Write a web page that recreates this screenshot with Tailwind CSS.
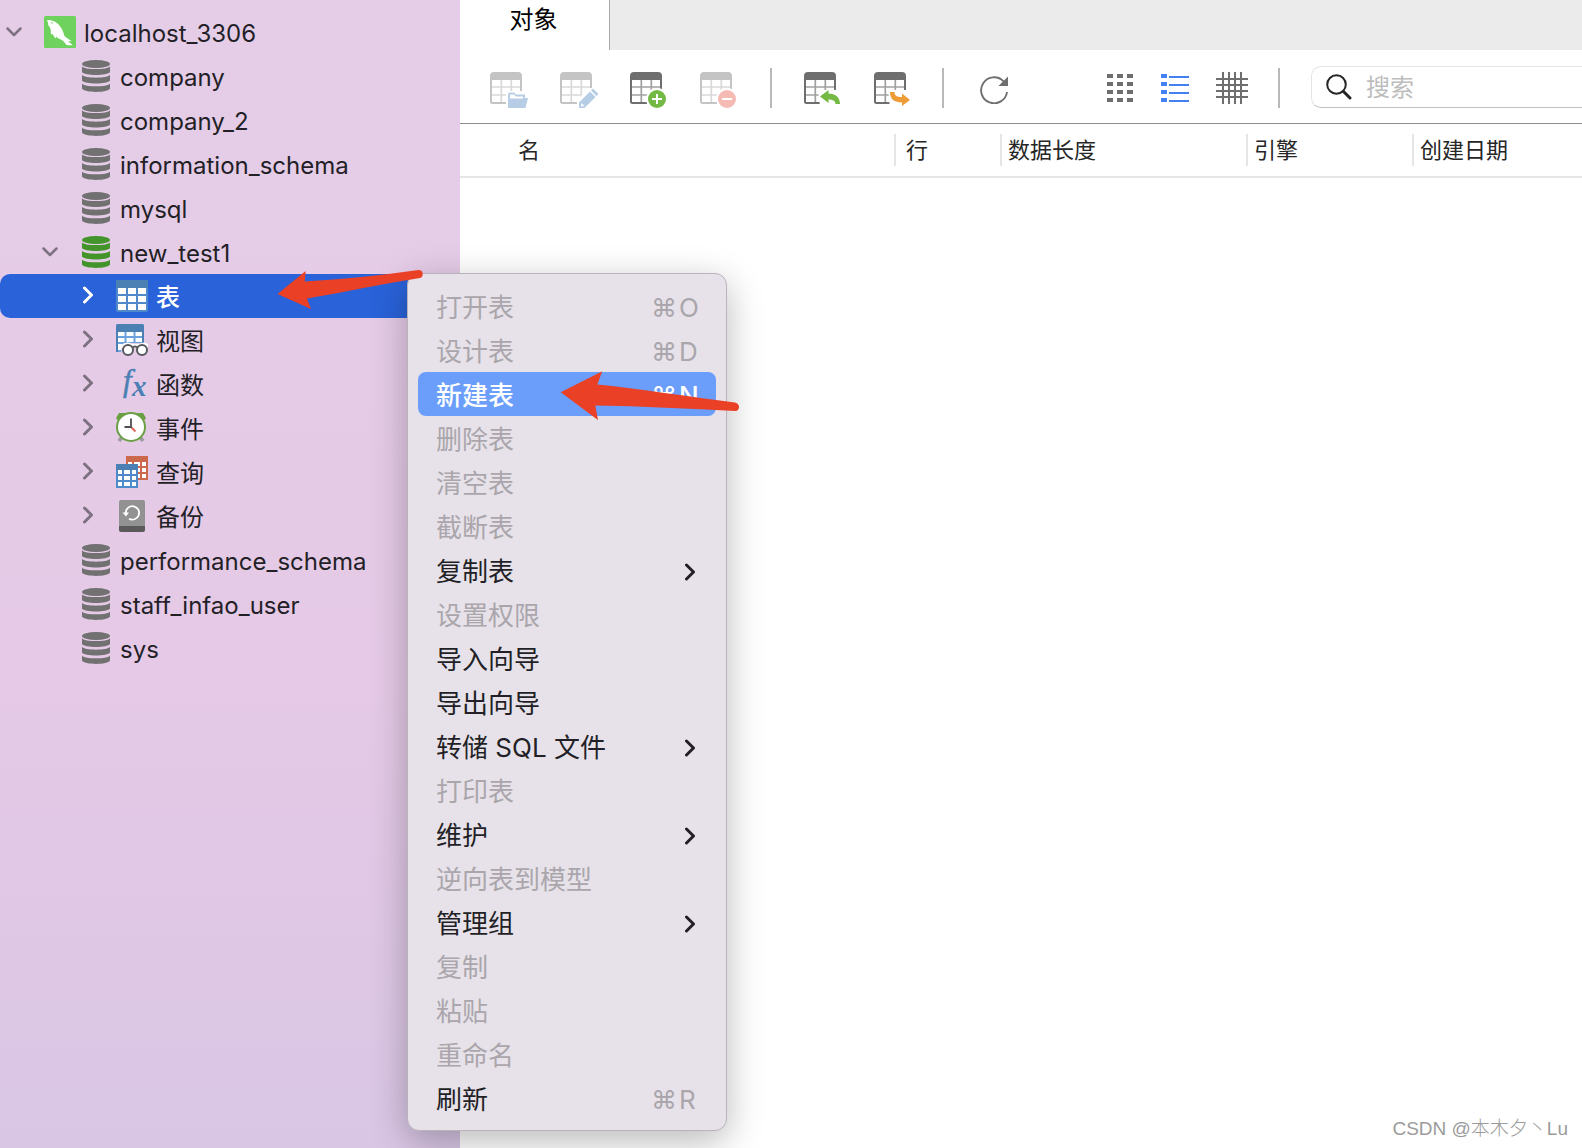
<!DOCTYPE html>
<html lang="zh-CN">
<head>
<meta charset="utf-8">
<meta name="viewport" content="width=device-width, initial-scale=1">
<title>localhost_3306</title>
<script src="https://cdn.jsdelivr.net/npm/@tailwindcss/browser@4"></script>
</head>
<body class="relative flex min-h-screen overflow-x-hidden bg-white font-['Inter','Noto_Sans_CJK_SC',sans-serif] text-[#231f26]">

<!-- shared icon shapes -->
<svg class="hidden" aria-hidden="true">
  <symbol id="db" viewBox="0 0 28 32">
    <ellipse cx="14" cy="4" rx="14" ry="4"/>
    <path d="M0 6.2C2 10 26 10 28 6.2V12C26 16 2 16 0 12Z"/>
    <path d="M0 14.8C2 18.6 26 18.6 28 14.8V20.500C26 24.500 2 24.500 0 20.500Z"/>
    <path d="M0 23.400C2 27.200 26 27.200 28 23.400V28.500C26 33 2 33 0 28.500Z"/>
  </symbol>
  <symbol id="right" viewBox="0 0 10 18"><path d="M1.500 2 8.500 9 1.500 16" fill="none" stroke="currentColor" stroke-width="3" stroke-linecap="round" stroke-linejoin="round"/></symbol>
  <symbol id="down" viewBox="0 0 16 10"><path d="M1.500 1.500 8 8 14.500 1.500" fill="none" stroke="currentColor" stroke-width="2.500" stroke-linecap="round" stroke-linejoin="round"/></symbol>
  <symbol id="sheet" viewBox="0 0 38 36">
    <path d="M1 8V29.500Q1 31 2.500 31H29.500Q31 31 31 29.500V8" fill="none" stroke="currentColor" stroke-width="2"/>
    <path d="M11.300 8V31M21.300 8V31M2 15H30M2 23H30" fill="none" stroke="currentColor" stroke-opacity=".65" stroke-width="1.700"/>
    <path d="M0 8V4Q0 0 4 0H28Q32 0 32 4V8Z" fill="currentColor"/>
  </symbol>
</svg>

<aside class="w-[460px] shrink-0 bg-linear-to-b from-[#e5cde7] via-[#e5c9e6] via-60% to-[#d9c6e5] pt-[10px]">
  <ul class="text-2xl leading-[44px]">
    <li class="flex h-[44px] items-center pl-[6px]">
      <svg class="h-[10px] w-4 text-[#7d7282]"><use href="#down"/></svg>
      <svg class="ml-[22px] h-8 w-8" viewBox="0 0 32 32"><rect width="32" height="32" rx="1.500" fill="#6fd25f"/><path d="M3.200 4C6 3.800 11 4.500 14.500 8.500C18 12.500 19.300 15.500 20.300 19.500C21 21.500 24.500 22.500 27.600 25.200L23.900 25.400C25.500 26.800 27.800 27.500 28.700 29.500C26 28.800 23.500 29.800 22 28.500C20.800 27.200 20 24.800 17 23.500C15.200 22.700 13.200 22.200 12.300 20.200C11.900 20.900 12.600 21.900 11.700 22.300C10 21.500 9.800 19.200 8.700 18.300C8 17.600 7.600 18.600 7.300 18.400C6.200 16.700 7.400 14.900 6.500 12.700C5.700 10.600 3.700 9.500 4 6.900C3.900 6 3.100 5.200 3.200 4Z" fill="#fff"/><circle cx="8" cy="7" r=".8" fill="#6fd25f"/></svg>
      <span class="ml-2 pt-[3px]">localhost_3306</span>
    </li>
    <li class="flex h-[44px] items-center pl-[82px]"><svg class="h-8 w-7 fill-[#717171]"><use href="#db"/></svg><span class="ml-[10px] pt-[3px]">company</span></li>
    <li class="flex h-[44px] items-center pl-[82px]"><svg class="h-8 w-7 fill-[#717171]"><use href="#db"/></svg><span class="ml-[10px] pt-[3px]">company_2</span></li>
    <li class="flex h-[44px] items-center pl-[82px]"><svg class="h-8 w-7 fill-[#717171]"><use href="#db"/></svg><span class="ml-[10px] pt-[3px]">information_schema</span></li>
    <li class="flex h-[44px] items-center pl-[82px]"><svg class="h-8 w-7 fill-[#717171]"><use href="#db"/></svg><span class="ml-[10px] pt-[3px]">mysql</span></li>
    <li class="flex h-[44px] items-center pl-[42px]">
      <svg class="h-[10px] w-4 text-[#7d7282]"><use href="#down"/></svg>
      <svg class="ml-6 h-8 w-7 fill-[#43952b]"><use href="#db"/></svg><span class="ml-[10px] pt-[3px]">new_test1</span>
    </li>
    <li class="flex h-[44px] items-center rounded-l-[10px] bg-[#2962d9] pl-[83px] font-medium text-white">
      <svg class="mb-[2px] h-[18px] w-[10px]"><use href="#right"/></svg>
      <svg class="ml-[23px] h-8 w-8" viewBox="0 0 32 32"><rect width="32" height="32" rx="2" fill="#4f8bcb"/><path d="M0 8V2Q0 0 2 0H30Q32 0 32 2V8Z" fill="#4b80b5"/><path fill="#fff" d="M2 8h8v6H2zM12 8h8v6h-8zM22 8h8v6h-8zM2 16h8v6H2zM12 16h8v6h-8zM22 16h8v6h-8zM2 24h8v6H2zM12 24h8v6h-8zM22 24h8v6h-8z"/></svg>
      <span class="ml-2 pt-[3px]">表</span>
    </li>
    <li class="flex h-[44px] items-center pl-[83px]">
      <svg class="mb-[2px] h-[18px] w-[10px] text-[#7d7282]"><use href="#right"/></svg>
      <svg class="ml-[23px] h-8 w-8" viewBox="0 0 32 32"><path d="M0 28V2Q0 0 2 0H26Q28 0 28 2V19H8Q5 22 5 28Z" fill="#6ba3df"/><path d="M0 8V2Q0 0 2 0H26Q28 0 28 2V8ZM0 8H2V28H0ZM26 8h2v11h-2z" fill="#4b80b5"/><path fill="#fff" d="M2 8h6.500v4H2zM10.500 8h7v4h-7zM19.500 8H26v4h-6.500zM2 14h6.500v4H2zM10.500 14h7v4h-7zM19.500 14H26v4h-6.500zM2 20h5l-2 6H2z"/><path d="M7 20Q12 17 16 20H24Q28 17 32 20V24H6Z" fill="#fff"/><g fill="#fff" stroke="#55585c" stroke-width="2"><path d="M16 24Q19 21 22 24" fill="none"/><circle cx="12" cy="26" r="5"/><circle cx="26" cy="26" r="5"/></g></svg>
      <span class="ml-2 pt-[3px]">视图</span>
    </li>
    <li class="flex h-[44px] items-center pl-[83px]">
      <svg class="mb-[2px] h-[18px] w-[10px] text-[#7d7282]"><use href="#right"/></svg>
      <svg class="ml-[23px] h-8 w-8 overflow-visible fill-[#4b80b5] font-['Liberation_Serif',serif] italic" viewBox="0 0 32 32"><text x="7" y="23" font-size="31" stroke="#4b80b5" stroke-width=".5">f</text><text x="16" y="28" font-size="29" font-weight="700">x</text></svg>
      <span class="ml-2 pt-[3px]">函数</span>
    </li>
    <li class="flex h-[44px] items-center pl-[83px]">
      <svg class="mb-[2px] h-[18px] w-[10px] text-[#7d7282]"><use href="#right"/></svg>
      <svg class="ml-[23px] h-8 w-8" viewBox="0 0 32 32"><path d="M6 25 3 29M24 25l3 4" stroke="#9a9a9a" stroke-width="3.500"/><path d="M0 6 3 1 9 1 10 4 3 10ZM30 6 27 1 21 1 20 4 27 10Z" fill="#6aa043"/><circle cx="15" cy="15" r="14" fill="#fff" stroke="#6aa043" stroke-width="2"/><path d="M15 15 19.500 19.500" stroke="#e5645a" stroke-width="2"/><path d="M15 6.500V15H8.500" fill="none" stroke="#4f4f4f" stroke-width="1.800"/></svg>
      <span class="ml-2 pt-[3px]">事件</span>
    </li>
    <li class="flex h-[44px] items-center pl-[83px]">
      <svg class="mb-[2px] h-[18px] w-[10px] text-[#7d7282]"><use href="#right"/></svg>
      <svg class="ml-[23px] h-8 w-8" viewBox="0 0 32 32"><path d="M10 0H32V24H10Z" fill="#cc694c"/><path fill="#fff" d="M12 6h4v4h-4zM18 6h6v4h-6zM26 6h4v4h-4zM22 12h2v4h-2zM26 12h4v4h-4zM22 18h2v4h-2zM26 18h4v4h-4z"/><path d="M0 8H22V32H0Z" fill="#4f8bcb"/><path d="M0 8H22V14H0Z" fill="#4b80b5"/><path fill="#fff" d="M2 14h4v4H2zM8 14h6v4H8zM16 14h4v4h-4zM2 20h4v4H2zM8 20h6v4H8zM16 20h4v4h-4zM2 26h4v4H2zM8 26h6v4H8zM16 26h4v4h-4z"/></svg>
      <span class="ml-2 pt-[3px]">查询</span>
    </li>
    <li class="flex h-[44px] items-center pl-[83px]">
      <svg class="mb-[2px] h-[18px] w-[10px] text-[#7d7282]"><use href="#right"/></svg>
      <svg class="ml-[23px] h-8 w-8" viewBox="0 0 32 32"><path d="M3 26V2Q3 0 5 0H27Q29 0 29 2V26Z" fill="#929292"/><path d="M3 26H29V30Q29 32 27 32H5Q3 32 3 30Z" fill="#5a5a5a"/><path d="M9.700 13A6.700 6.700 0 1 1 13 18.700" fill="none" stroke="#fff" stroke-width="1.800"/><path d="M6.500 12.500H13L10 16.500Z" fill="#fff"/></svg>
      <span class="ml-2 pt-[3px]">备份</span>
    </li>
    <li class="flex h-[44px] items-center pl-[82px]"><svg class="h-8 w-7 fill-[#717171]"><use href="#db"/></svg><span class="ml-[10px] pt-[3px]">performance_schema</span></li>
    <li class="flex h-[44px] items-center pl-[82px]"><svg class="h-8 w-7 fill-[#717171]"><use href="#db"/></svg><span class="ml-[10px] pt-[3px]">staff_infao_user</span></li>
    <li class="flex h-[44px] items-center pl-[82px]"><svg class="h-8 w-7 fill-[#717171]"><use href="#db"/></svg><span class="ml-[10px] pt-[3px]">sys</span></li>
  </ul>
</aside>

<main class="flex min-w-0 flex-1 flex-col">
  <div class="flex h-[50px] bg-[#ebebeb]">
    <button class="w-[150px] border-r border-[#a8a8a8] bg-white pr-[2px] pb-[10px] text-2xl text-black">对象</button>
  </div>

  <div class="flex h-[74px] items-center border-b border-[#8e8e8e] pt-[2px] pl-[30px] text-[#6e6e6e]">
    <div class="flex gap-8 pt-1">
      <button disabled aria-label="打开表" class="text-[#c4c4c4]"><svg class="h-9 w-[38px]" viewBox="0 0 38 36"><use href="#sheet"/><path d="M16 19H38V36H16Z" fill="#fff"/><path d="M18 36V22Q18 20.500 19.500 20.500H24L26 22.500H35V26H38L35.500 36Z" fill="#b7cde5"/><path d="M20 26.500V22.500H24L26 24.500H33V26.500Z" fill="#fff"/></svg></button>
      <button disabled aria-label="设计表" class="text-[#c4c4c4]"><svg class="h-9 w-[38px]" viewBox="0 0 38 36"><use href="#sheet"/><path d="M17 36V28L29 16H38V36Z" fill="#fff"/><path d="M19 36V30.500L30 19.500 35.500 25 24.500 36ZM31 18.500 33 16.500 38.500 22 36.500 24Z" fill="#b7cde5"/><path d="M21 34.500 21.500 31 24.500 34Z" fill="#fff"/></svg></button>
      <button aria-label="新建表"><svg class="h-9 w-[38px]" viewBox="0 0 38 36"><use href="#sheet"/><circle cx="27" cy="27" r="11" fill="#fff"/><circle cx="27" cy="27" r="9" fill="#74b943"/><path d="M27 22V32M22 27H32" stroke="#fff" stroke-width="2"/></svg></button>
      <button disabled aria-label="删除表" class="text-[#c4c4c4]"><svg class="h-9 w-[38px]" viewBox="0 0 38 36"><use href="#sheet"/><circle cx="27" cy="27" r="11" fill="#fff"/><circle cx="27" cy="27" r="9" fill="#f5bab4"/><path d="M22 27H32" stroke="#fff" stroke-width="2"/></svg></button>
    </div>
    <span class="mx-8 h-10 w-[2px] bg-[#b9b9b9]"></span>
    <div class="flex gap-8 pt-1">
      <button aria-label="导入向导"><svg class="h-9 w-[38px]" viewBox="0 0 38 36"><use href="#sheet"/><path d="M14 18H36V34H16Z" fill="#fff"/><path d="M16 24.500 24.500 18V21.500C31 21.500 36 25 36 32H31.500C31.500 29 29 27.500 24.500 27.500V31Z" fill="#74b943"/></svg></button>
      <button aria-label="导出向导"><svg class="h-9 w-[38px]" viewBox="0 0 38 36"><use href="#sheet"/><path d="M14 18H38V36H16Z" fill="#fff"/><path d="M16 20H20.500C20.500 24 23 25 28 25V21.500L36 28 28 34V30.500C20 30.500 16 27 16 20Z" fill="#ee9c38"/></svg></button>
    </div>
    <span class="mr-9 ml-[30px] h-10 w-[2px] bg-[#b9b9b9]"></span>
    <button aria-label="刷新" class="pt-1"><svg class="h-7 w-7" viewBox="0 0 28 28"><path d="M27 16A13 13 0 1 1 23.500 5.300" fill="none" stroke="currentColor" stroke-width="1.900"/><path d="M28 .5V10H18.500Z" fill="currentColor"/></svg></button>
    <div class="ml-[98px] flex items-center gap-[27px]">
      <button aria-label="图标"><svg class="h-7 w-7" viewBox="0 0 28 28"><path fill="currentColor" d="M1 0h6v4H1zM11 0h6v4h-6zM21 0h6v4h-6zM1 8h6v4H1zM11 8h6v4h-6zM21 8h6v4h-6zM1 16h6v4H1zM11 16h6v4h-6zM21 16h6v4h-6zM1 24h6v4H1zM11 24h6v4h-6zM21 24h6v4h-6z"/></svg></button>
      <button aria-label="列表" class="text-[#4480ef]"><svg class="h-7 w-7" viewBox="0 0 28 28"><path fill="currentColor" d="M0 0h6v4H0zM8 2h20v2H8zM0 8h6v4H0zM8 10h20v2H8zM0 16h6v4H0zM8 18h20v2H8zM0 24h6v4H0zM8 26h20v2H8z"/></svg></button>
      <button aria-label="详细信息"><svg class="h-8 w-8" viewBox="0 0 32 32"><path fill="currentColor" d="M6 0h2v32H6zM12 0h2v32h-2zM18 0h2v32h-2zM24 0h2v32h-2zM0 6h32v2H0zM0 12h32v2H0zM0 18h32v2H0zM0 24h32v2H0z"/></svg></button>
    </div>
    <span class="mr-[31px] ml-[30px] h-10 w-[2px] bg-[#b9b9b9]"></span>
    <label class="mb-[2px] flex h-[42px] min-w-0 flex-1 items-center rounded-l-[10px] border border-r-0 border-[#e4e4e4] border-b-[#c0c0c0] pl-[14px]">
      <svg class="h-[26px] w-[26px] shrink-0 text-[#262626]" viewBox="0 0 26 26"><circle cx="10.500" cy="10.500" r="9.300" fill="none" stroke="currentColor" stroke-width="2"/><path d="M17.500 17.500 24 24" stroke="currentColor" stroke-width="3" stroke-linecap="round"/></svg>
      <input type="search" aria-label="搜索" placeholder="搜索" class="ml-[14px] w-full min-w-0 pt-[2px] text-2xl leading-8 text-black outline-none placeholder:text-[#bdbdbd]">
    </label>
  </div>

  <table class="w-full table-fixed text-left text-[22px] leading-8 text-[#262626]">
    <colgroup><col class="w-[436px]"><col class="w-[106px]"><col class="w-[246px]"><col class="w-[166px]"><col></colgroup>
    <thead>
      <tr class="h-[53px] border-b-2 border-[#e5e5e5]">
        <th class="p-0 font-normal"><div class="border-r-2 border-[#e5e5e5] pl-[58px]">名</div></th>
        <th class="p-0 font-normal"><div class="border-r-2 border-[#e5e5e5] pl-[10px]">行</div></th>
        <th class="p-0 font-normal"><div class="border-r-2 border-[#e5e5e5] pl-[6px]">数据长度</div></th>
        <th class="p-0 font-normal"><div class="border-r-2 border-[#e5e5e5] pl-[6px]">引擎</div></th>
        <th class="p-0 font-normal"><div class="pl-[6px]">创建日期</div></th>
      </tr>
    </thead>
  </table>

  <footer class="mt-auto pr-[14px] pb-[7px] text-right font-['Liberation_Sans','Noto_Sans_CJK_SC',sans-serif] text-[19px] leading-6 font-light text-[#9b9b9b]">CSDN @本木夕丶Lu</footer>
</main>

<!-- context menu of the 表 node -->
<menu class="absolute top-[273px] left-[407px] w-[320px] rounded-xl border border-[#b9b3bb] bg-[#e7e2e9] p-[10px] text-[26px] leading-[44px] shadow-[0_10px_36px_rgba(0,0,0,0.28)]">
  <li><button disabled class="flex h-[44px] w-full items-center justify-between pt-[3px] pr-[17px] pl-[18px] text-[#aaa6ac]">打开表<kbd class="flex gap-[2px] font-[Inter,'DejaVu_Sans',sans-serif]">⌘<span class="w-5 text-left">O</span></kbd></button></li>
  <li><button disabled class="flex h-[44px] w-full items-center justify-between pt-[3px] pr-[17px] pl-[18px] text-[#aaa6ac]">设计表<kbd class="flex gap-[2px] font-[Inter,'DejaVu_Sans',sans-serif]">⌘<span class="w-5 text-left">D</span></kbd></button></li>
  <li><button class="flex h-[44px] w-full items-center justify-between rounded-lg bg-[#6a9efa] pt-[3px] pr-[17px] pl-[18px] font-medium text-white">新建表<kbd class="flex gap-[2px] font-[Inter,'DejaVu_Sans',sans-serif]">⌘<span class="w-5 text-left">N</span></kbd></button></li>
  <li><button disabled class="flex h-[44px] w-full items-center pt-[3px] pl-[18px] text-[#aaa6ac]">删除表</button></li>
  <li><button disabled class="flex h-[44px] w-full items-center pt-[3px] pl-[18px] text-[#aaa6ac]">清空表</button></li>
  <li><button disabled class="flex h-[44px] w-full items-center pt-[3px] pl-[18px] text-[#aaa6ac]">截断表</button></li>
  <li><button class="flex h-[44px] w-full items-center justify-between pt-[3px] pr-[21px] pl-[18px]">复制表<svg class="h-[18px] w-[10px] overflow-visible"><use href="#right"/></svg></button></li>
  <li><button disabled class="flex h-[44px] w-full items-center pt-[3px] pl-[18px] text-[#aaa6ac]">设置权限</button></li>
  <li><button class="flex h-[44px] w-full items-center pt-[3px] pl-[18px]">导入向导</button></li>
  <li><button class="flex h-[44px] w-full items-center pt-[3px] pl-[18px]">导出向导</button></li>
  <li><button class="flex h-[44px] w-full items-center justify-between pt-[3px] pr-[21px] pl-[18px]">转储 SQL 文件<svg class="h-[18px] w-[10px] overflow-visible"><use href="#right"/></svg></button></li>
  <li><button disabled class="flex h-[44px] w-full items-center pt-[3px] pl-[18px] text-[#aaa6ac]">打印表</button></li>
  <li><button class="flex h-[44px] w-full items-center justify-between pt-[3px] pr-[21px] pl-[18px]">维护<svg class="h-[18px] w-[10px] overflow-visible"><use href="#right"/></svg></button></li>
  <li><button disabled class="flex h-[44px] w-full items-center pt-[3px] pl-[18px] text-[#aaa6ac]">逆向表到模型</button></li>
  <li><button class="flex h-[44px] w-full items-center justify-between pt-[3px] pr-[21px] pl-[18px]">管理组<svg class="h-[18px] w-[10px] overflow-visible"><use href="#right"/></svg></button></li>
  <li><button disabled class="flex h-[44px] w-full items-center pt-[3px] pl-[18px] text-[#aaa6ac]">复制</button></li>
  <li><button disabled class="flex h-[44px] w-full items-center pt-[3px] pl-[18px] text-[#aaa6ac]">粘贴</button></li>
  <li><button disabled class="flex h-[44px] w-full items-center pt-[3px] pl-[18px] text-[#aaa6ac]">重命名</button></li>
  <li><button class="flex h-[44px] w-full items-center justify-between pt-[3px] pr-[17px] pl-[18px]">刷新<kbd class="flex gap-[2px] font-[Inter,'DejaVu_Sans',sans-serif] text-[#aaa6ac]">⌘<span class="w-5 text-left">R</span></kbd></button></li>
</menu>

<!-- annotation arrows -->
<svg class="pointer-events-none absolute top-[266px] left-[274px] h-[160px] w-[470px] fill-[#ea4025]" viewBox="274 266 470 160" aria-hidden="true">
  <path d="M277.500 294 305.700 271 304.700 281.500C343 279.500 381 275 418.500 270Q422.500 270 422.700 274Q422.700 277.500 420 278C382 284 345 292 307 298.500L311 309Z"/>
  <path d="M560.700 392.300 602.300 371.300 597.300 384.500C643 389 690 397 735 402.500Q739 403.500 739 407Q738.500 411 735.500 411C689 409 642 406 595.300 405.500L598 420Z"/>
</svg>
</body>
</html>
